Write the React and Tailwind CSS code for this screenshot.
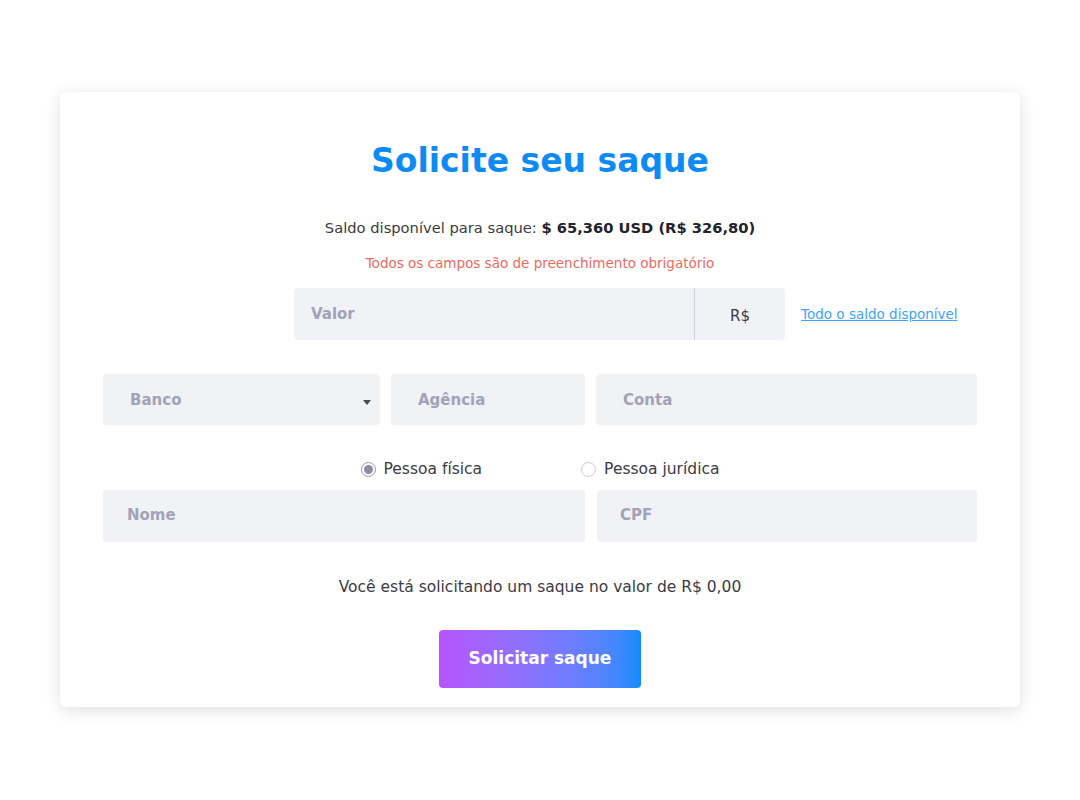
const font = { fontFamily: '"DejaVu Sans", "Noto Sans", sans-serif' }

const Field = ({ placeholder, className = '', pad = 'pl-[27px]', children }) => (
  <div className={`relative flex h-[51px] items-center rounded-[4px] bg-[#f1f2f6] ${pad} ${className}`}>
    <span className="text-[15px] font-bold text-[#a0a3b9]">{placeholder}</span>
    {children}
  </div>
)

const Radio = ({ checked, label }) => (
  <label className="flex items-center gap-[8px] text-[15.5px] text-[#3a3b45]">
    <span
      className={`flex h-[15px] w-[15px] items-center justify-center rounded-full border ${
        checked ? 'border-[#9598ad]' : 'border-[#c9cbd6]'
      } bg-white`}
    >
      {checked && <span className="h-[9px] w-[9px] rounded-full bg-[#8a8ea6]" />}
    </span>
    {label}
  </label>
)

export default function App() {
  return (
    <div className="min-h-[800px] bg-white pt-[92px]" style={font}>
      <div className="mx-[60px] h-[615px] rounded-[6px] bg-white px-[43px] pt-[41px] shadow-[0_3px_16px_rgba(0,0,0,0.13)]">
        <h1 className="text-center text-[33px] font-bold leading-[56px] text-[#0d8bf3]">Solicite seu saque</h1>

        <p className="mt-[28px] text-center text-[14.7px] text-[#3a3b45]">
          Saldo disponível para saque: <b className="text-[#22232c]">$ 65,360 USD (R$ 326,80)</b>
        </p>

        <p className="mt-[14px] text-center text-[13.5px] text-[#ef6a5e]">
          Todos os campos são de preenchimento obrigatório
        </p>

        {/* Valor */}
        <div className="mt-[15px] flex items-center pl-[191px]">
          <div className="flex h-[52px] w-[491px] overflow-hidden rounded-[4px] bg-[#f1f2f6]">
            <div className="flex flex-1 items-center pl-[17px]">
              <span className="text-[15px] font-bold text-[#a0a3b9]">Valor</span>
            </div>
            <div className="flex w-[91px] items-center justify-center border-l border-[#cfd1dc] pt-[3px] text-[15px] text-[#3a3b45]">
              R$
            </div>
          </div>
          <a href="#" className="ml-[16px] text-[13.5px] text-[#3fa3f6] underline">
            Todo o saldo disponível
          </a>
        </div>

        {/* Banco / Agência / Conta */}
        <div className="mt-[34px] flex gap-[11px]">
          <Field placeholder="Banco" className="w-[277px]">
            <svg className="absolute right-[9px] top-[26px]" width="8" height="5" viewBox="0 0 8 5">
              <path d="M0 0h8L4 5z" fill="#4a4b55" />
            </svg>
          </Field>
          <Field placeholder="Agência" className="w-[194px]" />
          <Field placeholder="Conta" className="flex-1" />
        </div>

        {/* Tipo de pessoa */}
        <div className="mt-[33px] flex justify-center gap-[99px]">
          <Radio checked label="Pessoa física" />
          <Radio label="Pessoa jurídica" />
        </div>

        <div className="mt-[8px] flex gap-[12px]">
          <Field placeholder="Nome" pad="pl-[24px]" className="w-[482px] h-[52px]" />
          <Field placeholder="CPF" pad="pl-[23px]" className="flex-1 h-[52px]" />
        </div>

        <p className="mt-[34px] text-center text-[15.5px] text-[#3a3b45]">
          Você está solicitando um saque no valor de R$ 0,00
        </p>

        <div className="mt-[31px] flex justify-center">
          <button className="h-[58px] w-[202px] rounded-[4px] bg-gradient-to-r from-[#b654fb] to-[#0a8cfe] text-[17px] font-bold text-white">
            Solicitar saque
          </button>
        </div>
      </div>
    </div>
  )
}
